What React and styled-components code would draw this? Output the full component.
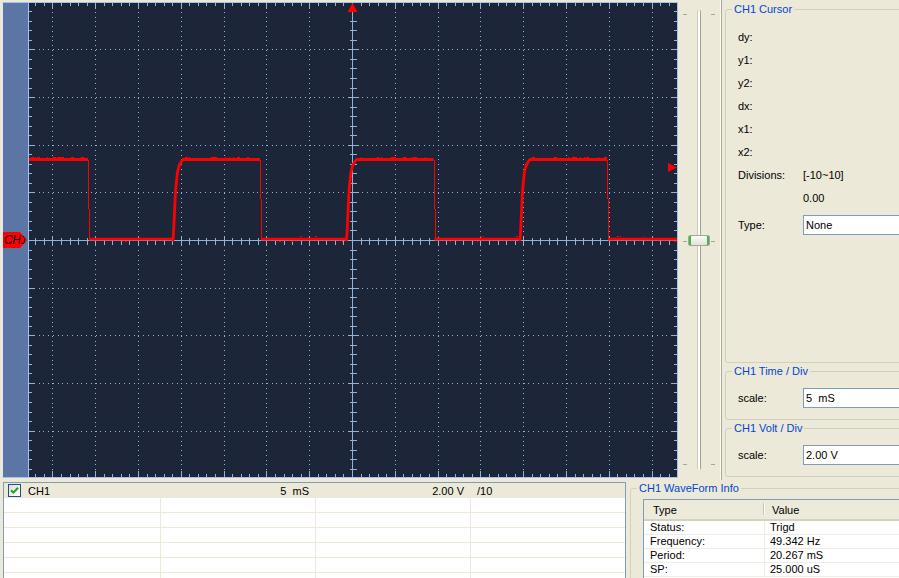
import React from 'react';
import styled, { createGlobalStyle } from 'styled-components';

const GlobalStyle = createGlobalStyle`
  html, body { margin: 0; padding: 0; background: #ece9d8; overflow: hidden; }
  body { font-family: "Liberation Sans", Arial, sans-serif; font-size: 11px; color: #000; }
  * { box-sizing: border-box; }
`;

const Window = styled.div`
  width: 899px;
  height: 578px;
  overflow: hidden;
  display: flex;
  flex-direction: column;
  background: #ece9d8;
`;

const TopRow = styled.div`
  display: flex;
  height: 480px;
  flex-shrink: 0;
`;

const ScopeWrap = styled.div`
  width: 678px;
  flex-shrink: 0;
  padding: 2px 0 0 2px;
`;

const ScopeFrame = styled.div`
  display: flex;
  width: 676px;
  height: 476px;
  border: 1px solid #a7c4e8;
  border-left-color: #dfe6ef;
`;

const ChannelStrip = styled.div`
  position: relative;
  width: 26px;
  flex-shrink: 0;
  background: #5b76a4;
  border-right: 1px solid #a7c4e8;
`;

const ChannelMarker = styled.div`
  position: absolute;
  left: 0;
  top: ${p => p.$top}px;
  width: 24px;
  height: 16px;
  background: #ff0000;
  clip-path: polygon(0 0, 17px 0, 24px 50%, 17px 100%, 0 100%);
  font-style: italic;
  font-size: 12px;
  line-height: 16px;
  padding-left: 1px;
  color: #000;
  letter-spacing: -0.3px;
`;

const Plot = styled.svg`
  display: block;
  width: 648px;
  height: 474px;
  background: #1d2639;
  flex-shrink: 0;
`;

const SliderCol = styled.div`
  position: relative;
  width: 42px;
  flex-shrink: 0;
`;

const Track = styled.div`
  margin: 10px auto 0;
  width: 4px;
  height: 459px;
  background: #fff;
  border-left: 1px solid #cbc8b8;
  border-right: 1px solid #a19f92;
  border-radius: 2px 2px 0 0;
`;

const SliderTick = styled.div`
  position: absolute;
  left: ${p => p.$left}px;
  top: ${p => p.$top}px;
  width: 4px;
  height: 1px;
  background: #a9a79a;
`;

const Thumb = styled.div`
  position: absolute;
  left: 10px;
  top: ${p => p.$top}px;
  width: 22px;
  height: 11px;
  border: 1px solid #a6a59a;
  border-radius: 2px;
  background: linear-gradient(#fbfbf8, #e2e1da);
  box-shadow: inset 2px 0 0 #47b547, inset -2px 0 0 #47b547;
`;

const Separator = styled.div`
  width: 2px;
  flex-shrink: 0;
  border-left: 1px solid #fbfaf5;
  border-right: 1px solid #aca899;
`;

const RightCol = styled.div`
  display: flex;
  flex-direction: column;
  flex-shrink: 0;
  padding-left: 3px;
  width: 210px;
`;

const GroupBox = styled.div`
  position: relative;
  flex-shrink: 0;
  width: ${p => p.$width || 200}px;
  height: ${p => p.$height}px;
  margin-top: ${p => p.$mt}px;
  margin-left: ${p => p.$ml || 0}px;
  border: 1px solid #d0d0bf;
  border-radius: 3px;
`;

const GroupTitle = styled.div`
  position: absolute;
  top: -7px;
  left: 6px;
  padding: 0 2px;
  line-height: 13px;
  background: #ece9d8;
  color: #0046d5;
  white-space: nowrap;
`;

const CursorGrid = styled.div`
  display: grid;
  grid-template-columns: 65px auto;
  grid-auto-rows: 23px;
  align-items: center;
  padding: 15px 0 0 12px;
`;

const FieldRow = styled.div`
  display: flex;
  align-items: center;
  padding-left: 12px;
  margin-top: ${p => p.$mt}px;
`;

const FieldLabel = styled.span`
  width: 65px;
  flex-shrink: 0;
`;

const InputBox = styled.div`
  width: 120px;
  height: 20px;
  display: flex;
  align-items: center;
  padding-left: 2px;
  border: 1px solid #7f9db9;
  background: #fff;
  white-space: pre;
`;

const BottomRow = styled.div`
  display: flex;
  height: 98px;
  flex-shrink: 0;
`;

const ListPanel = styled.div`
  width: 623px;
  flex-shrink: 0;
  margin: 2px 0 0 3px;
  border: 1px solid #7f9db9;
  border-bottom: none;
  background: #fff;
`;

const COLS = '157px 155px 155px 154px';

const ListHeader = styled.div`
  display: grid;
  grid-template-columns: ${COLS};
  height: 15px;
  background: #ece9d8;
  align-items: center;
  white-space: pre;
`;

const HeadCell = styled.div`
  display: flex;
  align-items: center;
  justify-content: ${p => (p.$right ? 'flex-end' : 'flex-start')};
  padding: ${p => (p.$right ? '0 7px 0 0' : '0 0 0 ' + (p.$pl || 0) + 'px')};
  gap: 7px;
`;

const CheckBox = styled.span`
  width: 13px;
  height: 13px;
  border: 1px solid #1c5180;
  background: linear-gradient(135deg, #dcdcd7, #fff);
  display: flex;
  align-items: center;
  justify-content: center;
`;

const ListRow = styled.div`
  display: grid;
  grid-template-columns: ${COLS};
  height: 15px;
  border-bottom: 1px solid #ece9d8;
`;

const ListCell = styled.div`
  border-right: ${p => (p.$last ? 'none' : '1px solid #ece9d8')};
`;

const InfoList = styled.div`
  width: 262px;
  height: 90px;
  border: 1px solid #7f9db9;
  background: #fff;
`;

const InfoHeader = styled.div`
  display: grid;
  grid-template-columns: 121px 1fr;
  height: 21px;
  background: #ebeadb;
  border-bottom: 2px solid #d6d2c2;
  align-items: center;
`;

const InfoHeadCell = styled.div`
  position: relative;
  height: 100%;
  display: flex;
  align-items: center;
  padding-left: ${p => p.$pl}px;
  ${p =>
    p.$sep &&
    `&::after{content:'';position:absolute;right:1px;top:3px;bottom:4px;width:1px;background:#c7c5b2;box-shadow:1px 0 #fff;}`}
`;

const InfoRow = styled.div`
  display: grid;
  grid-template-columns: 121px 1fr;
  height: 14px;
  border-bottom: 1px solid #efede3;
  align-items: center;
`;

const InfoCell = styled.div`
  padding-left: ${p => p.$pl}px;
  line-height: 13px;
  border-right: ${p => (p.$sep ? '1px solid #efede3' : 'none')};
  height: 100%;
  display: flex;
  align-items: center;
`;

const InfoContent = styled.div`
  padding: 10px 0 0 12px;
`;

/* ---------------- scope drawing ---------------- */
const CX = 352.5;
const CY = 240.5;
const DX = 42.8;
const DY = 47.65;
const L = 29, R = 677, T = 3, B = 477;

function GridLayer() {
  const items = [];
  for (let k = -7; k <= 7; k++) {
    if (!k) continue;
    const x = CX + k * DX;
    items.push(
      <line key={'v' + k} x1={x} x2={x} y1={CY - 5 * DY} y2={CY + 5 * DY} strokeDasharray={`1 ${DY / 10 - 1}`} />
    );
  }
  for (let k = -4; k <= 4; k++) {
    if (!k) continue;
    const y = CY + k * DY;
    items.push(
      <line key={'h' + k} x1={CX - 8 * DX} x2={CX + 8 * DX} y1={y} y2={y} strokeDasharray={`1 ${DX / 9 - 1}`} />
    );
  }
  items.push(<line key="ax" x1={L} x2={R} y1={CY} y2={CY} />);
  items.push(<line key="ay" x1={CX} x2={CX} y1={T} y2={B} />);
  for (let i = -40; i <= 40; i++) {
    const x = CX + (i * DX) / 5;
    if (x < L || x > R) continue;
    const major = i % 5 === 0;
    const len = major ? 6 : 3;
    const c = major ? 4 : 3;
    items.push(<line key={'tt' + i} x1={x} x2={x} y1={T} y2={T + len} />);
    items.push(<line key={'tb' + i} x1={x} x2={x} y1={B - len} y2={B} />);
    items.push(<line key={'tc' + i} x1={x} x2={x} y1={CY - c} y2={CY + c + 1} />);
  }
  for (let j = -30; j <= 30; j++) {
    const y = CY + (j * DY) / 5;
    if (y < T || y > B) continue;
    const major = j % 5 === 0;
    const len = major ? 6 : 3;
    const c = major ? 5 : 3;
    items.push(<line key={'tl' + j} x1={L} x2={L + len} y1={y} y2={y} />);
    items.push(<line key={'tr' + j} x1={R - len} x2={R} y1={y} y2={y} />);
    items.push(<line key={'tm' + j} x1={CX - c} x2={CX + c + 1} y1={y} y2={y} />);
  }
  return (
    <g stroke="#8fb3dd" strokeWidth="1" shapeRendering="crispEdges">
      {items}
    </g>
  );
}

const HI = 159.5;
const LO = 239.2;
const RISE = [[0, 240], [0.6, 232], [1.5, 212], [2.5, 192], [3.5, 181], [4.5, 172], [6, 166], [8, 162], [10, HI]];
const riseAt = x0 => RISE.map(([dx, y]) => `L${x0 + dx},${y}`).join(' ');

const risesX = [173, 346.5, 520];
const fallsX = [88, 260, 433.5, 607];

function makeRand(seed) {
  let s = seed;
  return () => {
    s = (s * 16807) % 2147483647;
    return s / 2147483647;
  };
}

function Waveform() {
  const thick =
    `M${L},${HI} H${fallsX[0]} ` +
    risesX
      .map((rx, i) => `M${fallsX[i] + 1},${LO} H${rx} ${riseAt(rx)} H${fallsX[i + 1]}`)
      .join(' ') +
    ` M${fallsX[3] + 1},${LO} H${R}`;
  const thin = fallsX
    .map((fx, i) => {
      const mid = i % 2 ? 199 : 209;
      return `M${fx + 0.5},${HI} V${mid} M${fx + 1.5},${mid} V${LO}`;
    })
    .join(' ');
  const rand = makeRand(12345);
  const noise = [];
  const highs = [[L, fallsX[0]], ...risesX.map((rx, i) => [rx + 10, fallsX[i + 1]])];
  highs.forEach(([a, b], si) => {
    for (let x = a + 2; x < b - 2; x += 2) {
      if (rand() < 0.28) {
        noise.push(<rect key={`n${si}-${x}`} x={Math.round(x)} y={157} width={1 + Math.floor(rand() * 3)} height={1} />);
      }
    }
  });
  const lows = [[fallsX[0] + 2, risesX[0]], [fallsX[1] + 2, risesX[1]], [fallsX[2] + 2, risesX[2]], [fallsX[3] + 2, R]];
  lows.forEach(([a, b], si) => {
    for (let x = a + 2; x < b - 2; x += 3) {
      if (rand() < 0.12) {
        noise.push(<rect key={`m${si}-${x}`} x={Math.round(x)} y={rand() < 0.5 ? 236 : 241} width={1 + Math.floor(rand() * 2)} height={1} />);
      }
    }
  });
  return (
    <g>
      <path d={thick} fill="none" stroke="#ff0000" strokeWidth="2.8" strokeLinejoin="round" />
      <path d={thin} fill="none" stroke="#ff0000" strokeWidth="1" shapeRendering="crispEdges" />
      <g fill="#ff0000" shapeRendering="crispEdges">{noise}</g>
      <polygon points="352.5,3 357.5,12 347.5,12" fill="#ff0000" />
      <polygon points="668,163 677,167.5 668,172" fill="#ff0000" />
    </g>
  );
}

/* ---------------- page ---------------- */
const cursorRows = ['dy:', 'y1:', 'y2:', 'dx:', 'x1:', 'x2:'];

const infoRows = [
  ['Status:', 'Trigd'],
  ['Frequency:', '49.342 Hz'],
  ['Period:', '20.267 mS'],
  ['SP:', '25.000 uS'],
];

export default function App() {
  return (
    <>
      <GlobalStyle />
      <Window>
        <TopRow>
          <ScopeWrap>
            <ScopeFrame>
              <ChannelStrip>
                <ChannelMarker $top={229}>CH1</ChannelMarker>
              </ChannelStrip>
              <Plot viewBox={`${L} ${T} 648 474`}>
                <GridLayer />
                <Waveform />
              </Plot>
            </ScopeFrame>
          </ScopeWrap>

          <SliderCol>
            <Track />
            {[14, 241, 464].map(t => (
              <React.Fragment key={t}>
                <SliderTick $left={5} $top={t} />
                <SliderTick $left={33} $top={t} />
              </React.Fragment>
            ))}
            <Thumb $top={235} />
          </SliderCol>

          <Separator />

          <RightCol>
            <GroupBox $mt={9} $height={354}>
              <GroupTitle>CH1 Cursor</GroupTitle>
              <CursorGrid>
                {cursorRows.map(r => (
                  <React.Fragment key={r}>
                    <span>{r}</span>
                    <span />
                  </React.Fragment>
                ))}
                <span>Divisions:</span>
                <span>[-10~10]</span>
                <span />
                <span>0.00</span>
              </CursorGrid>
              <FieldRow $mt={6}>
                <FieldLabel>Type:</FieldLabel>
                <InputBox>None</InputBox>
              </FieldRow>
            </GroupBox>

            <GroupBox $mt={8} $height={49}>
              <GroupTitle>CH1 Time / Div</GroupTitle>
              <FieldRow $mt={16}>
                <FieldLabel>scale:</FieldLabel>
                <InputBox>{'5  mS'}</InputBox>
              </FieldRow>
            </GroupBox>

            <GroupBox $mt={8} $height={49}>
              <GroupTitle>CH1 Volt / Div</GroupTitle>
              <FieldRow $mt={16}>
                <FieldLabel>scale:</FieldLabel>
                <InputBox>2.00 V</InputBox>
              </FieldRow>
            </GroupBox>
          </RightCol>
        </TopRow>

        <BottomRow>
          <ListPanel>
            <ListHeader>
              <HeadCell $pl={4}>
                <CheckBox>
                  <svg width="9" height="9" viewBox="0 0 9 9">
                    <path d="M1 4.2 L3.4 6.6 L8 1.8" fill="none" stroke="#21a121" strokeWidth="2" />
                  </svg>
                </CheckBox>
                <span>CH1</span>
              </HeadCell>
              <HeadCell $right>{'5  mS'}</HeadCell>
              <HeadCell $right>2.00 V</HeadCell>
              <HeadCell $pl={6}>/10</HeadCell>
            </ListHeader>
            {[0, 1, 2, 3, 4, 5].map(i => (
              <ListRow key={i}>
                <ListCell />
                <ListCell />
                <ListCell />
                <ListCell $last />
              </ListRow>
            ))}
          </ListPanel>

          <GroupBox $mt={8} $ml={4} $height={120} $width={290}>
            <GroupTitle>CH1 WaveForm Info</GroupTitle>
            <InfoContent>
              <InfoList>
                <InfoHeader>
                  <InfoHeadCell $pl={9} $sep>Type</InfoHeadCell>
                  <InfoHeadCell $pl={7}>Value</InfoHeadCell>
                </InfoHeader>
                {infoRows.map(([k, v]) => (
                  <InfoRow key={k}>
                    <InfoCell $pl={6} $sep>{k}</InfoCell>
                    <InfoCell $pl={5}>{v}</InfoCell>
                  </InfoRow>
                ))}
              </InfoList>
            </InfoContent>
          </GroupBox>
        </BottomRow>
      </Window>
    </>
  );
}
